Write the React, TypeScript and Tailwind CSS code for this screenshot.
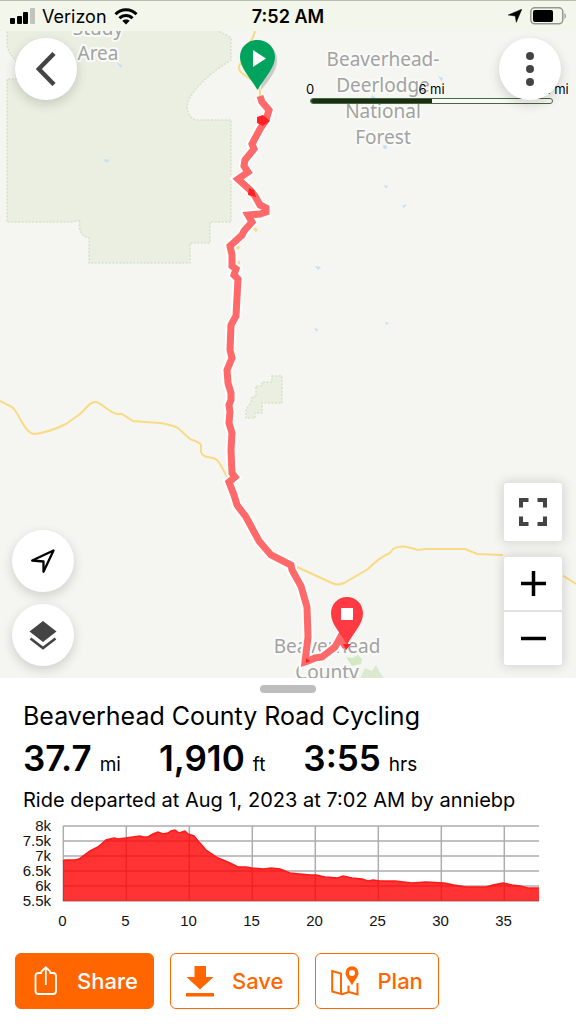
import type { ReactNode } from "react"

const ROUTE =
  "260,96 262,102 269,110 266,120 260,129 252,144 254,149 245,160 244,166 248,172 238,179 250,190 255,196 260,205 266,208 266,212 260,214 248,215 252,222 244,231 242,235 230,246 232,255 232,266 236,269 234,275 238,279 236,316 231,325 230,350 232,358 227,370 228,383 231,393 231,400 229,405 230,412 229,423 232,433 231,450 232,473 235,477 229,482 234,495 237,505 246,517 259,541 271,555 291,565 292,570 301,586 307,607 308,637 305,662 308,661 315,658 322,657 335,647 340,638 346,647"

const MILES = [0, 5, 10, 15, 20, 25, 30, 35]
const FEET = ["8k", "7.5k", "7k", "6.5k", "6k", "5.5k"]

const ELEVATION =
  "63,861 65,860 75,860 79,859 83,856 90,851 98,847 106,840 110,839 114,838 118,839 126,838 133,837 140,836 143,837 148,837 153,834 158,832 163,834 168,833 171,831 175,830 179,833 182,832 185,831 188,834 194,836 199,842 206,850 212,854 218,858 223,860 230,863 238,867 246,867 252,868 264,869 271,868 280,869 290,873 300,874 310,875 316,875 325,877 338,878 343,876 352,878 362,879 368,881 373,880 380,881 395,881 412,883 426,882 444,883 454,885 466,887 486,887 493,885 503,883 512,885 520,886 528,888 539,888"

interface RoundButtonProps {
  label: string
  children: ReactNode
}

const RoundButton = ({ label, children }: RoundButtonProps) => (
  <button
    aria-label={label}
    className="pointer-events-auto flex h-[62px] w-[62px] items-center justify-center rounded-full bg-white shadow-[0_4px_12px_rgba(0,0,0,0.16)]"
  >
    {children}
  </button>
)

interface StatProps {
  value: string
  unit: string
}

const Stat = ({ value, unit }: StatProps) => (
  <p className="flex items-baseline gap-2">
    <span className="text-[35px] leading-[44px] font-semibold">{value}</span>
    <span className="text-[19px]">{unit}</span>
  </p>
)

const StatusBar = () => (
  <header className="grid h-[31px] grid-cols-[1fr_auto_1fr] items-center border-t border-[#b9bbb1] bg-[#f3f6ea] px-[10px] text-[18px]">
    <div className="flex items-center gap-[7px]">
      <svg width="25" height="16" viewBox="0 0 25 16">
        <rect x="0" y="10" width="5" height="6" rx="1" />
        <rect x="7" y="8" width="5" height="8" rx="1" />
        <rect x="13" y="4" width="5" height="12" rx="1" />
        <rect x="20" y="0" width="5" height="16" rx="1" fill="#c2c4bb" />
      </svg>
      <span>Verizon</span>
      <svg width="24" height="17" viewBox="0 0 24 17" fill="none" stroke="#000" strokeWidth="3">
        <path d="M1.500 6.300C7.500 .2 16.500 .2 22.500 6.300" />
        <path d="M5.500 10.300C9.300 6.500 14.700 6.500 18.500 10.300" />
        <path d="M12 16.500L8.300 12.800C10.400 10.900 13.600 10.900 15.700 12.800Z" fill="#000" stroke="none" />
      </svg>
    </div>
    <span className="font-semibold">7:52 AM</span>
    <div className="flex items-center justify-end gap-2">
      <svg width="14" height="14" viewBox="0 0 14 14">
        <path d="M13.800 .2L8.300 13.300L7.200 7L.2 6Z" stroke="#000" strokeWidth=".5" strokeLinejoin="round" />
      </svg>
      <svg width="36" height="18" viewBox="0 0 36 18">
        <rect x=".8" y=".8" width="32" height="16" rx="4" fill="none" stroke="#95978f" strokeWidth="1.500" />
        <rect x="3" y="3" width="20" height="12" rx="2" />
        <path d="M34.500 6C36.300 7 36.300 11 34.500 12Z" fill="#95978f" />
      </svg>
    </div>
  </header>
)

const MapCanvas = () => (
  <svg className="absolute inset-0 h-full w-full" viewBox="0 31 576 647" preserveAspectRatio="xMidYMid slice">
    <g fill="#eaefe1" stroke="#d5e3ca" strokeWidth="1.500" strokeDasharray="2 1.500">
      <path d="M7 28V44C8 52 11 56 16 60V79H7V222H72L80 220C78 230 81 236 89 238V263H190V243H210V222H231V120H198C192 120 188 115 187 107C189 90 212 72 231 60V38Q225 33 210 28Z" />
      <path d="M272 376H282V403H262V413H255V418H246V410L251 402L252 397H256V386H262V382H272Z" />
    </g>
    <path d="M346 657L352 658L358 655L362 659L361 664L352 666Z" fill="#d3e9c4" />
    <path d="M360 678L365 668L372 671L376 665L379 671L384 678Z" fill="#dce9d0" />
    <g fill="#c5dff7">
      <path d="M103 159L110 160L106 163Z" />
      <path d="M117 63L122 65L121 68Z" />
      <path d="M438 76L443 78L442 82Z" />
      <path d="M372 95L376 98H371Z" />
      <circle cx="385" cy="147" r="2" />
      <path d="M384 185L388 186L386 189Z" />
      <path d="M402 206L407 204L404 208Z" />
      <path d="M315 266L321 267L318 270Z" />
      <path d="M314 328L318 329L317 332Z" />
      <path d="M385 322L389 323L386 325Z" />
    </g>
    <g fill="none" stroke="#f8db84" strokeWidth="2">
      <path d="M0 401L12 407C19 412 24 433 34 434C44 433 58 428 66 424L80 414C86 409 90 401 96 402C102 403 108 412 117 414H122L133 421L160 423Q172 425 178 428L190 439C197 442 200 442 201 445V452C204 460 211 455 217 460Q220 463 227 477" />
      <path d="M297 567L332 583Q338 586 344 583L368 569C377 560 382 556 390 553L393 549C400 545 405 546 418 550L425 549H465L477 554L503 555" />
      <path d="M562 575L576 584" />
      <path d="M255 31C253 42 246 44 247 53C247 60 235 64 240 71C244 77 256 79 260 90V98" />
      <path d="M254 228L257 231M239 246L237 249M238 261L239 264" strokeWidth="3" />
    </g>
    <g
      fill="#a2a2a2"
      stroke="#f9faf7"
      strokeWidth="4"
      strokeLinejoin="round"
      paintOrder="stroke"
      textAnchor="middle"
      className="font-['Noto_Sans',sans-serif] text-[19px]"
    >
      <text x="98" y="35">Study</text>
      <text x="98" y="60">Area</text>
      <text x="383" y="66">Beaverhead-</text>
      <text x="383" y="92">Deerlodge</text>
      <text x="383" y="118">National</text>
      <text x="383" y="144">Forest</text>
      <text x="327" y="653">Beaverhead</text>
      <text x="327" y="679">County</text>
    </g>
    <polyline points={ROUTE} fill="none" stroke="#fff" strokeWidth="11" />
    <polyline points={ROUTE} fill="none" stroke="#ff6969" strokeWidth="7" />
    <g fill="#ff1f26">
      <path d="M257 117L263 115L270 121L263 126L257 123Z" />
      <path d="M249 188L254 190L256 197L248 195Z" />
      <path d="M306 658L310 661L306 663Z" />
      <path d="M343 644H351L346 650Z" />
    </g>
    <path d="M261 90C271 78 277 70 277 60C277 48 268 44 263 44Z" fill="#000" opacity=".17" />
    <path d="M257.500 90C250 77 240 68 240 57C240 47 248 40 257.500 40S275 47 275 57C275 68 265 77 257.500 90Z" fill="#00a35e" />
    <path d="M253 50L266 58.500L253 67Z" fill="#fff" />
    <path d="M347 645C340 632 331 624 331 613.500C331 604 338 597 347 597S363 604 363 613.500C363 624 354 632 347 645Z" fill="#ff3a42" />
    <rect x="341" y="608" width="12" height="12" fill="#fff" />
  </svg>
)

const ScaleBar = () => (
  <div className="absolute top-[49px] right-[23px] w-[243px] text-[13px] leading-[18px]">
    <div className="flex justify-between [text-shadow:0_0_2px_#fff,0_0_2px_#fff]">
      <span className="flex w-0 justify-center whitespace-nowrap">0</span>
      <span className="flex w-0 justify-center whitespace-nowrap">6 mi</span>
      <span className="flex w-0 justify-center whitespace-nowrap">12 mi</span>
    </div>
    <div className="h-[6px] overflow-hidden rounded-full border border-[#4c6348] bg-[#f8faf6]">
      <div className="h-full w-1/2 bg-[#15310f]" />
    </div>
  </div>
)

const MapView = () => (
  <section className="relative min-h-[480px] flex-1 overflow-hidden bg-[#f5f6f1]">
    <MapCanvas />
    <ScaleBar />
    <div className="pointer-events-none absolute inset-0 flex flex-col justify-between pt-[7px] pb-3">
      <div className="flex justify-between px-[15px]">
        <RoundButton label="Back">
          <svg width="20" height="34" viewBox="0 0 20 34" fill="none" stroke="#444" strokeWidth="4.500">
            <path d="M18 1.500L2.800 17L18 32.500" />
          </svg>
        </RoundButton>
        <RoundButton label="More options">
          <svg width="8" height="34" viewBox="0 0 8 34" fill="#444">
            <circle cx="4" cy="4" r="4" />
            <circle cx="4" cy="17" r="4" />
            <circle cx="4" cy="30" r="4" />
          </svg>
        </RoundButton>
      </div>
      <div className="flex items-end justify-between pr-[13px] pl-3">
        <div className="flex flex-col gap-3">
          <RoundButton label="My location">
            <svg width="24" height="24" viewBox="0 0 24 24" fill="none" stroke="#000" strokeWidth="2.300" strokeLinejoin="round">
              <path d="M22.500 1.500L1.200 11.500L12.500 12.500V22.800Z" />
            </svg>
          </RoundButton>
          <RoundButton label="Map layers">
            <svg width="28" height="30" viewBox="0 0 28 30">
              <path d="M14 1L27.500 11.500L14 22L.5 11.500Z" fill="#444" />
              <path d="M1.500 18.500L14 28L26.500 18.500" fill="none" stroke="#444" strokeWidth="2.600" />
            </svg>
          </RoundButton>
        </div>
        <div className="pointer-events-auto flex w-[60px] flex-col gap-[14px]">
          <button
            aria-label="Full screen"
            className="flex h-[60px] items-center justify-center rounded-[3px] border border-[#e4e4e2] bg-white shadow-[0_0_12px_rgba(0,0,0,0.16)]"
          >
            <svg width="28" height="28" viewBox="0 0 28 28" fill="none" stroke="#444" strokeWidth="4">
              <path d="M2 9.500V2H9.500M18.500 2H26V9.500M26 18.500V26H18.500M9.500 26H2V18.500" />
            </svg>
          </button>
          <div className="flex flex-col gap-[2px] rounded-[3px] border border-[#e4e4e2] bg-[#e0e0de] shadow-[0_0_12px_rgba(0,0,0,0.16)]">
            <button aria-label="Zoom in" className="flex h-[53px] items-center justify-center rounded-t-[2px] bg-white">
              <svg width="25" height="25" viewBox="0 0 25 25" stroke="#000" strokeWidth="3.500">
                <path d="M0 12.500H25M12.500 0V25" />
              </svg>
            </button>
            <button aria-label="Zoom out" className="flex h-[53px] items-center justify-center rounded-b-[2px] bg-white">
              <svg width="25" height="25" viewBox="0 0 25 25" stroke="#000" strokeWidth="3.500">
                <path d="M0 12.500H25" />
              </svg>
            </button>
          </div>
        </div>
      </div>
    </div>
  </section>
)

// drawn in page units: 63px per 5 miles, 15px per 500 ft
const ElevationChart = () => (
  <svg className="w-full" viewBox="0 812 576 122">
    <g stroke="#adadad" strokeWidth="1.500">
      {FEET.map((label, i) => (
        <line key={label} x1="63" x2="539" y1={826 + i * 15} y2={826 + i * 15} />
      ))}
      {MILES.map((mile, i) => (
        <line key={mile} x1={63.300 + i * 63} x2={63.300 + i * 63} y1="826" y2="901" />
      ))}
    </g>
    <polygon points={`63,901 ${ELEVATION} 539,901`} fill="#ff0000" opacity=".8" />
    <polyline points={ELEVATION} fill="none" stroke="#ff1a1a" strokeWidth="1.500" />
    <g fill="#111" className="font-['Liberation_Sans',Arial,sans-serif] text-[15px]">
      {FEET.map((label, i) => (
        <text key={label} x="51" y={831 + i * 15} textAnchor="end">
          {label}
        </text>
      ))}
      {MILES.map((mile, i) => (
        <text key={mile} x={62.500 + i * 63} y="926" textAnchor="middle">
          {mile}
        </text>
      ))}
    </g>
  </svg>
)

const ShareIcon = () => (
  <svg width="28" height="32" viewBox="0 0 28 32" fill="none" stroke="currentColor" strokeWidth="1.800">
    <path d="M11 8H7.500Q4.500 8 4.500 11V26Q4.500 29 7.500 29H22Q25 29 25 26V11Q25 8 22 8H18.500M14.800 20V2.500M10 7L14.800 2.200L19.600 7" />
  </svg>
)

const SaveIcon = () => (
  <svg width="28" height="32" viewBox="0 0 28 32" fill="currentColor">
    <path d="M8.500 1H20V12H27.500L14 24.500L.5 12H8.500ZM0 28H28V31.500H0Z" />
  </svg>
)

const PlanIcon = () => (
  <svg width="28" height="32" viewBox="0 0 28 32" fill="none" stroke="currentColor" strokeWidth="2">
    <path d="M10 8V29L1.200 26.500V6L10 8.500M10 29.500L18 27L26.500 29.500V18M17.500 27V20.500" />
    <path
      d="M21 20.500C18.500 15 14.500 12 14.500 8A6.500 6.800 0 0 1 27.500 8C27.500 12 23.500 15 21 20.500ZM21 5A3 3 0 1 0 21 11A3 3 0 1 0 21 5Z"
      fill="currentColor"
      fillRule="evenodd"
      stroke="none"
    />
  </svg>
)

interface ActionButtonProps {
  label: string
  icon: ReactNode
  primary?: boolean
}

const ActionButton = ({ label, icon, primary }: ActionButtonProps) => (
  <button
    className={`flex h-14 items-center gap-[18px] rounded-md border border-[#ff6600] px-[15px] text-[22px] font-medium ${
      primary ? "bg-[#ff6600] text-white" : "bg-white text-[#ff6600]"
    }`}
  >
    {icon}
    {label}
  </button>
)

const RideSheet = () => (
  <section className="bg-white pt-[7px] pb-[15px]">
    <div className="mx-auto h-2 w-14 rounded-full bg-[#bdbdbd]" />
    <div className="mt-[7px] px-[23px]">
      <h1 className="text-[25px] leading-8">Beaverhead County Road Cycling</h1>
      <div className="mt-1 flex flex-wrap gap-x-[38px]">
        <Stat value="37.7" unit="mi" />
        <Stat value="1,910" unit="ft" />
        <Stat value="3:55" unit="hrs" />
      </div>
      <p className="mt-2 text-[20px] leading-6">Ride departed at Aug 1, 2023 at 7:02 AM by anniebp</p>
    </div>
    <ElevationChart />
    <div className="mt-[19px] flex flex-wrap gap-4 px-[15px]">
      <ActionButton label="Share" icon={<ShareIcon />} primary />
      <ActionButton label="Save" icon={<SaveIcon />} />
      <ActionButton label="Plan" icon={<PlanIcon />} />
    </div>
  </section>
)

const App = () => (
  <main className="flex min-h-screen flex-col bg-white font-['Inter',sans-serif] text-black">
    <StatusBar />
    <MapView />
    <RideSheet />
  </main>
)

export default App
